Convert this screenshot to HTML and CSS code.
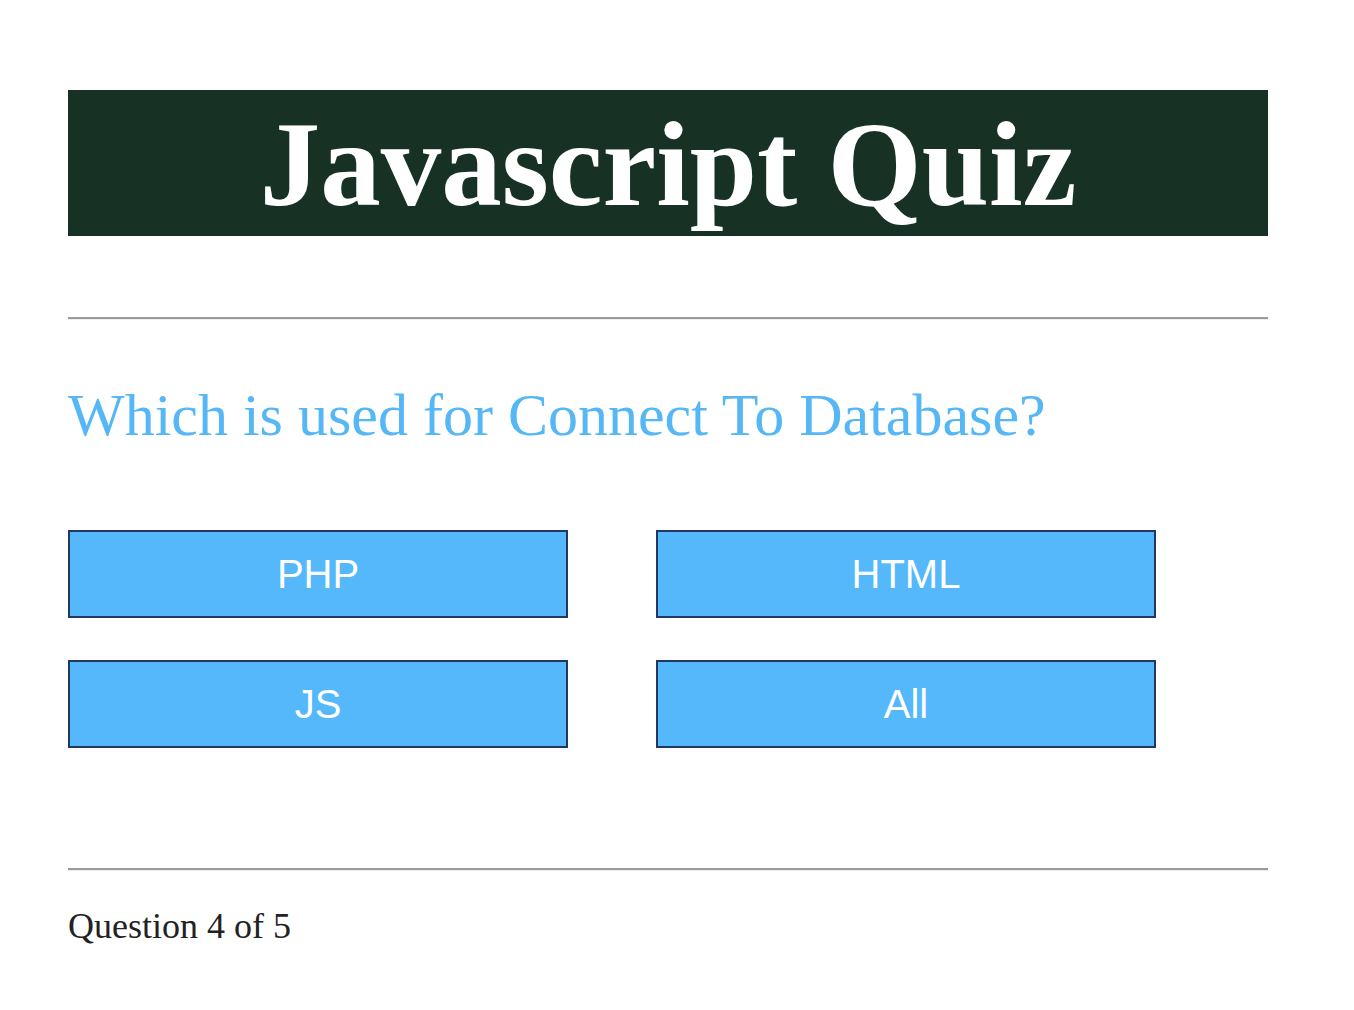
FILE: index.html
```html
<!DOCTYPE html>
<html>
<head>
<meta charset="utf-8">
<link rel="stylesheet" href="styles.css">
</head>
<body>
<div class="quiz">
  <header class="quiz-header"><h1 class="title">Javascript Quiz</h1></header>
  <hr class="rule rule-top">
  <h2 class="question">Which is used for Connect To Database?</h2>
  <div class="answers">
    <button class="answer">PHP</button>
    <button class="answer">HTML</button>
    <button class="answer">JS</button>
    <button class="answer">All</button>
  </div>
  <hr class="rule rule-bottom">
  <p class="progress">Question 4 of 5</p>
</div>
</body>
</html>
```
FILE: styles.css
```css
body {
  margin: 0;
  background: #fff;
  font-family: "Liberation Serif", "Times New Roman", serif;
}
.quiz {
  width: 1200px;
  margin: 90px 0 0 68px;
}
.quiz-header {
  background: #173124;
  height: 146px;
  display: flex;
  align-items: center;
  justify-content: center;
}
.title {
  margin: 0;
  color: #fff;
  font-size: 121px;
  font-weight: bold;
  line-height: 1;
  padding-top: 2px;
}
.rule {
  margin: 0;
  border: 0;
  height: 2px;
  background: #9a9a9a;
  border-bottom: 1px solid #eee;
}
.rule-top {
  margin-top: 81px;
}
.question {
  margin: 55px 0 0 0;
  color: #55b7f6;
  font-weight: normal;
  font-size: 60px;
  line-height: 80px;
}
.answers {
  margin-top: 75px;
  display: grid;
  grid-template-columns: 500px 500px;
  column-gap: 88px;
  row-gap: 42px;
}
.answer {
  height: 88px;
  background: #54b8fb;
  border: 2px solid #233762;
  color: #fff;
  font-family: "Liberation Sans", Arial, sans-serif;
  font-size: 40px;
  padding: 0;
  margin: 0;
}
.rule-bottom {
  margin-top: 120px;
}
.progress {
  margin: 35px 0 0 0;
  font-size: 36px;
  color: #222;
  line-height: 40px;
}
```
